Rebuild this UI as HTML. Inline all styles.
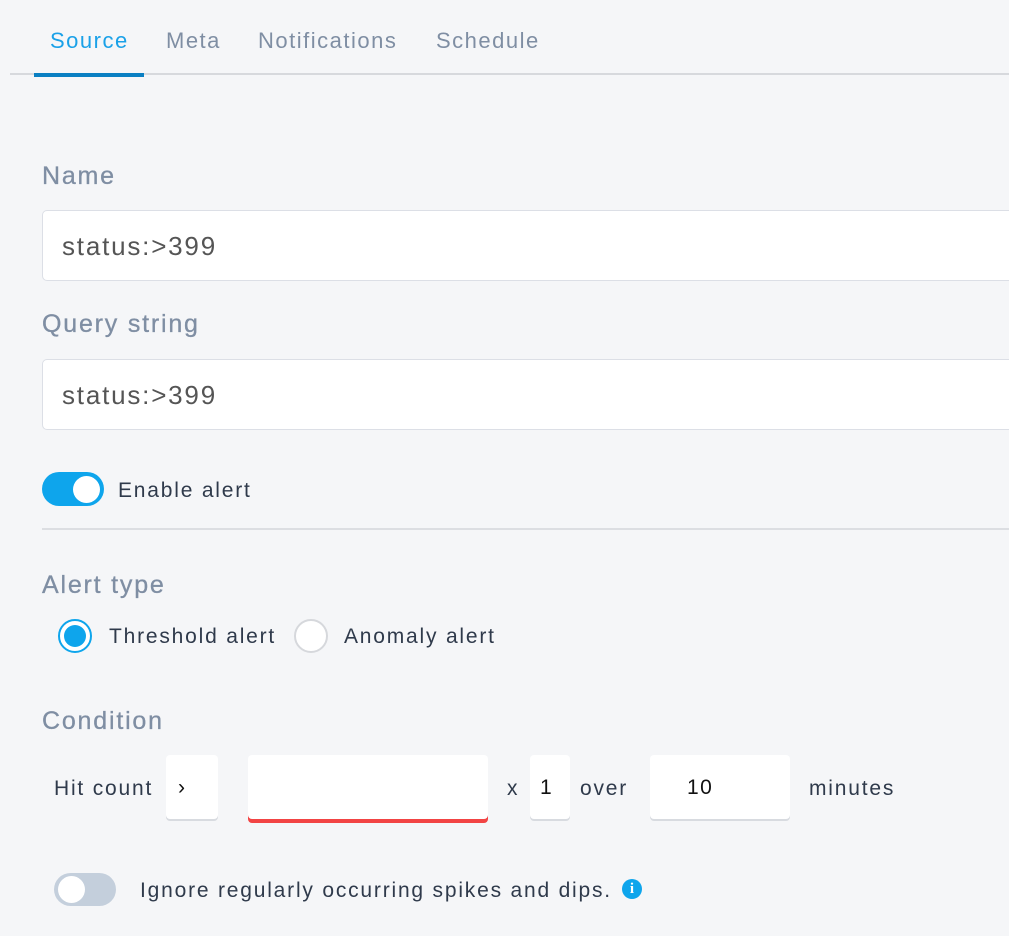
<!DOCTYPE html><html><head><style>
body{margin:0;width:1009px;height:936px;background:#f5f6f8;font-family:"Liberation Sans",sans-serif;position:relative;overflow:hidden}
.a{position:absolute;white-space:nowrap}
.tab{font-size:22px;color:#7f8ea3;top:28px;letter-spacing:1.5px}
.lbl{font-size:25px;color:#7f8ea3;left:42px;letter-spacing:1.8px;-webkit-text-stroke:0.3px #7f8ea3}
.inp{left:42px;width:1000px;height:71px;background:#fff;border:1px solid #dcdfe6;border-radius:5px;box-sizing:border-box;font-size:26px;color:#555;padding:20px 0 0 19px;letter-spacing:1.8px}
.t{font-size:21px;color:#2f3a4b;letter-spacing:1.8px}
.box{background:#fff;border-radius:4px;box-shadow:0 2px 0 #d8dbe0;height:64px;top:755px;font-size:21px;color:#111;text-align:center;line-height:66px}
</style></head><body>
<div class="a tab" style="left:50px;color:#1aa1e8">Source</div>
<div class="a tab" style="left:166px">Meta</div>
<div class="a tab" style="left:258px">Notifications</div>
<div class="a tab" style="left:436px">Schedule</div>
<div class="a" style="left:10px;top:73px;width:999px;height:2px;background:#d7d9dd"></div>
<div class="a" style="left:34px;top:73px;width:110px;height:4px;background:#0a7fc2"></div>
<div class="a lbl" style="top:162px">Name</div>
<div class="a inp" style="top:210px">status:&gt;399</div>
<div class="a lbl" style="top:310px">Query string</div>
<div class="a inp" style="top:359px">status:&gt;399</div>
<div class="a" style="left:42px;top:472px;width:62px;height:34px;border-radius:17px;background:#0ea5ec"></div>
<div class="a" style="left:73px;top:476px;width:27px;height:27px;border-radius:50%;background:#fff"></div>
<div class="a t" style="left:118px;top:479px">Enable alert</div>
<div class="a" style="left:42px;top:528px;width:967px;height:2px;background:#dcdee2"></div>
<div class="a lbl" style="top:571px">Alert type</div>
<div class="a" style="left:58px;top:619px;width:30px;height:30px;border-radius:50%;border:2px solid #0ea5ec;background:#fff"></div>
<div class="a" style="left:64px;top:625px;width:22px;height:22px;border-radius:50%;background:#0ea5ec"></div>
<div class="a t" style="left:109px;top:625px">Threshold alert</div>
<div class="a" style="left:294px;top:619px;width:30px;height:30px;border-radius:50%;border:2px solid #d6d8dc;background:#fff"></div>
<div class="a t" style="left:344px;top:625px">Anomaly alert</div>
<div class="a lbl" style="top:707px">Condition</div>
<div class="a t" style="left:54px;top:777px">Hit count</div>
<div class="a box" style="left:166px;width:52px;text-align:left;padding-left:12px;box-sizing:border-box">›</div>
<div class="a box" style="left:248px;width:240px;box-shadow:0 4px 0 #f24444"></div>
<div class="a t" style="left:507px;top:777px">x</div>
<div class="a box" style="left:530px;width:40px;text-align:left;padding-left:10px;box-sizing:border-box">1</div>
<div class="a t" style="left:580px;top:777px">over</div>
<div class="a box" style="left:650px;width:140px;text-align:left;padding-left:37px;box-sizing:border-box;letter-spacing:1.5px">10</div>
<div class="a t" style="left:809px;top:777px">minutes</div>
<div class="a" style="left:54px;top:873px;width:62px;height:33px;border-radius:17px;background:#c4cfdc"></div>
<div class="a" style="left:58px;top:876px;width:27px;height:27px;border-radius:50%;background:#fff"></div>
<div class="a t" style="left:140px;top:879px">Ignore regularly occurring spikes and dips.</div>
<div class="a" style="left:622px;top:879px;width:20px;height:20px;border-radius:50%;background:#0ea5ec;color:#fff;font-size:15px;font-weight:bold;text-align:center;line-height:20px;font-family:'Liberation Serif',serif">i</div>
</body></html>
